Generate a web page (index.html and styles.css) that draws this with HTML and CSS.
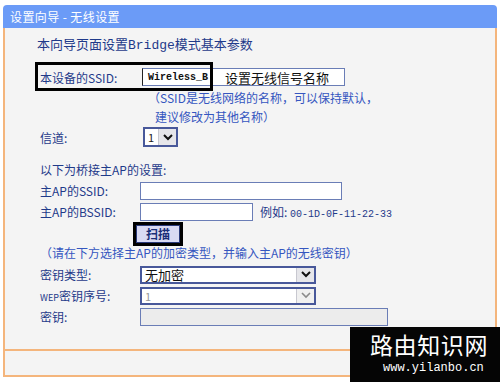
FILE: index.html
```html
<!DOCTYPE html>
<html lang="zh-CN">
<head>
  <meta charset="UTF-8" />
  <title>设置向导 - 无线设置</title>
  <link rel="stylesheet" href="styles.css">
</head>
<body>

  <div class="panel">
    <div class="panel-title">设置向导 - 无线设置</div>

    <div class="panel-body">
      <p class="intro">本向导页面设置Bridge模式基本参数</p>

      <div class="row row-ssid">
        <span class="label">本设备的SSID:</span>
        <div class="field ssid-field">
          <span class="ssid-value">Wireless_B</span>
          <span class="ssid-note">设置无线信号名称</span>
        </div>
        <span class="mark mark-ssid"></span>
      </div>

      <div class="hint">
        <div>（SSID是无线网络的名称，可以保持默认，</div>
        <div class="hint-cont">建议修改为其他名称）</div>
      </div>

      <div class="row row-channel">
        <span class="label">信道:</span>
        <div class="select select-channel">
          <span class="select-value">1</span>
          <span class="select-arrow"><svg width="10" height="7" viewBox="0 0 10 7"><polyline points="1,1 5,5 9,1" fill="none" stroke="#111" stroke-width="2"/></svg></span>
        </div>
      </div>

      <div class="group-title">以下为桥接主AP的设置:</div>

      <div class="row">
        <span class="label">主AP的SSID:</span>
        <div class="field field-ssid"></div>
      </div>

      <div class="row">
        <span class="label">主AP的BSSID:</span>
        <div class="field field-bssid"></div>
        <span class="example">例如: <span class="mono">00-1D-0F-11-22-33</span></span>
      </div>

      <div class="row row-action">
        <button class="scan">扫描</button>
      </div>

      <div class="note">（请在下方选择主AP的加密类型，并输入主AP的无线密钥）</div>

      <div class="row">
        <span class="label">密钥类型:</span>
        <div class="select select-wide">
          <span class="select-value value-dark">无加密</span>
          <span class="select-arrow"><svg width="10" height="7" viewBox="0 0 10 7"><polyline points="1,1 5,5 9,1" fill="none" stroke="#111" stroke-width="2"/></svg></span>
        </div>
      </div>

      <div class="row">
        <span class="label"><span class="small">WEP</span>密钥序号:</span>
        <div class="select select-wide disabled">
          <span class="select-value">1</span>
          <span class="select-arrow"><svg width="10" height="7" viewBox="0 0 10 7"><polyline points="1,1 5,5 9,1" fill="none" stroke="#8a8a8a" stroke-width="1.6"/></svg></span>
        </div>
      </div>

      <div class="row">
        <span class="label">密钥:</span>
        <div class="field field-key disabled"></div>
      </div>
    </div>

    <div class="panel-foot"></div>
  </div>

  <div class="watermark">
    <div class="wm-title">路由知识网</div>
    <div class="wm-url">www.yilanbo.cn</div>
  </div>

</body>
</html>
```

FILE: styles.css
```css
body {
  margin: 0;
  background: #fff;
  font-family: "Noto Sans CJK SC", sans-serif;
  font-size: 12px;
  color: #1f3a8a;
}

.panel {
  width: 494px;
  margin: 5px 3px 0 3px;
}

.panel-title {
  height: 23px;
  line-height: 23px;
  padding-left: 7px;
  background: #6b9bf7;
  color: #fff;
  letter-spacing: 0.4px;
  border-radius: 4px 4px 0 0;
}

.panel-body {
  box-sizing: border-box;
  height: 321px;
  padding: 9px 0 0 35px;
  background: #f4f4f4;
  border-left: 2px solid #f4b57c;
  border-right: 2px solid #f4b57c;
}

.panel-foot {
  height: 24px;
  background: #f4f4f4;
  border: 2px solid #f4b57c;
}

.intro {
  margin: 0 0 0 -3px;
  height: 18px;
  line-height: 18px;
  font-size: 13px;
  font-family: "Liberation Mono", "Noto Sans CJK SC", monospace;
}

.row {
  position: relative;
  display: flex;
  align-items: center;
  height: 19px;
  margin-top: 2px;
}

.label {
  flex: none;
  width: 100px;
}

.small {
  font-size: 9px;
}

.row-ssid {
  margin-top: 11px;
  height: 22px;
}

.row-channel {
  margin-top: 1px;
  height: 20px;
}

.row-action {
  margin-top: 3px;
  padding-left: 96px;
}

.field {
  box-sizing: border-box;
  height: 18px;
  background: #fff;
  border: 1px solid #6a7db6;
}

.field.disabled {
  background: #ececec;
}

.ssid-field {
  display: flex;
  align-items: center;
  width: 203px;
  margin-left: 2px;
  padding-left: 5px;
  border-left-color: #222;
}

.ssid-value {
  font-family: "Liberation Mono", monospace;
  font-size: 10px;
  font-weight: bold;
  color: #111;
}

.ssid-note {
  margin-left: 17px;
  font-size: 13px;
  color: #111;
}

.mark {
  position: absolute;
  box-sizing: border-box;
  border: 3px solid #000;
}

.mark-ssid {
  left: -5px;
  top: -4px;
  width: 178px;
  height: 29px;
}

.hint {
  line-height: 19px;
  padding-left: 108px;
  color: #3556c0;
}

.hint-cont {
  padding-left: 7px;
}

.group-title {
  margin-top: 13px;
  height: 19px;
  line-height: 19px;
}

.field-ssid {
  width: 202px;
}

.field-bssid {
  width: 113px;
}

.field-key {
  width: 248px;
}

.example {
  margin-left: 7px;
}

.mono {
  font-family: "Liberation Mono", monospace;
  font-size: 10px;
}

.select {
  box-sizing: border-box;
  display: flex;
  height: 18px;
  background: #fff;
  border: 2px solid #48589a;
}

.select-channel {
  width: 35px;
  height: 20px;
  margin-left: 3px;
}

.select-wide {
  width: 176px;
}

.select-value {
  flex: 1;
  padding-left: 3px;
  line-height: 14px;
  font-size: 11px;
  color: #222;
}

.select-channel .select-value {
  line-height: 16px;
}

.value-dark {
  font-size: 13px;
  color: #111;
}

.select-arrow {
  flex: none;
  width: 17px;
  display: flex;
  align-items: center;
  justify-content: center;
  background: #e6e6ea;
  border-left: 1px solid #c8c8d0;
}

.select.disabled .select-value {
  color: #999;
}

.select.disabled .select-arrow {
  background: #f0f0f0;
}

.scan {
  box-sizing: border-box;
  width: 44px;
  height: 18px;
  padding: 0;
  font-family: "Noto Sans CJK SC", sans-serif;
  font-size: 12px;
  font-weight: bold;
  line-height: 14px;
  color: #1a2f78;
  background: #d9daf3;
  border: 1px solid #2a3a7a;
  outline: 3px solid #000;
}

.note {
  margin: 1px 0 3px 0;
  height: 18px;
  line-height: 18px;
  color: #3556c0;
}

.watermark {
  position: absolute;
  left: 350px;
  top: 327px;
  width: 150px;
  height: 55px;
  background: #050505;
  color: #fff;
}

.wm-title {
  padding: 5px 0 0 20px;
  height: 24px;
  line-height: 24px;
  font-size: 23px;
  letter-spacing: 0.6px;
}

.wm-url {
  padding: 6px 0 0 33px;
  line-height: 12px;
  font-family: "Liberation Mono", monospace;
  font-size: 12px;
}
```
